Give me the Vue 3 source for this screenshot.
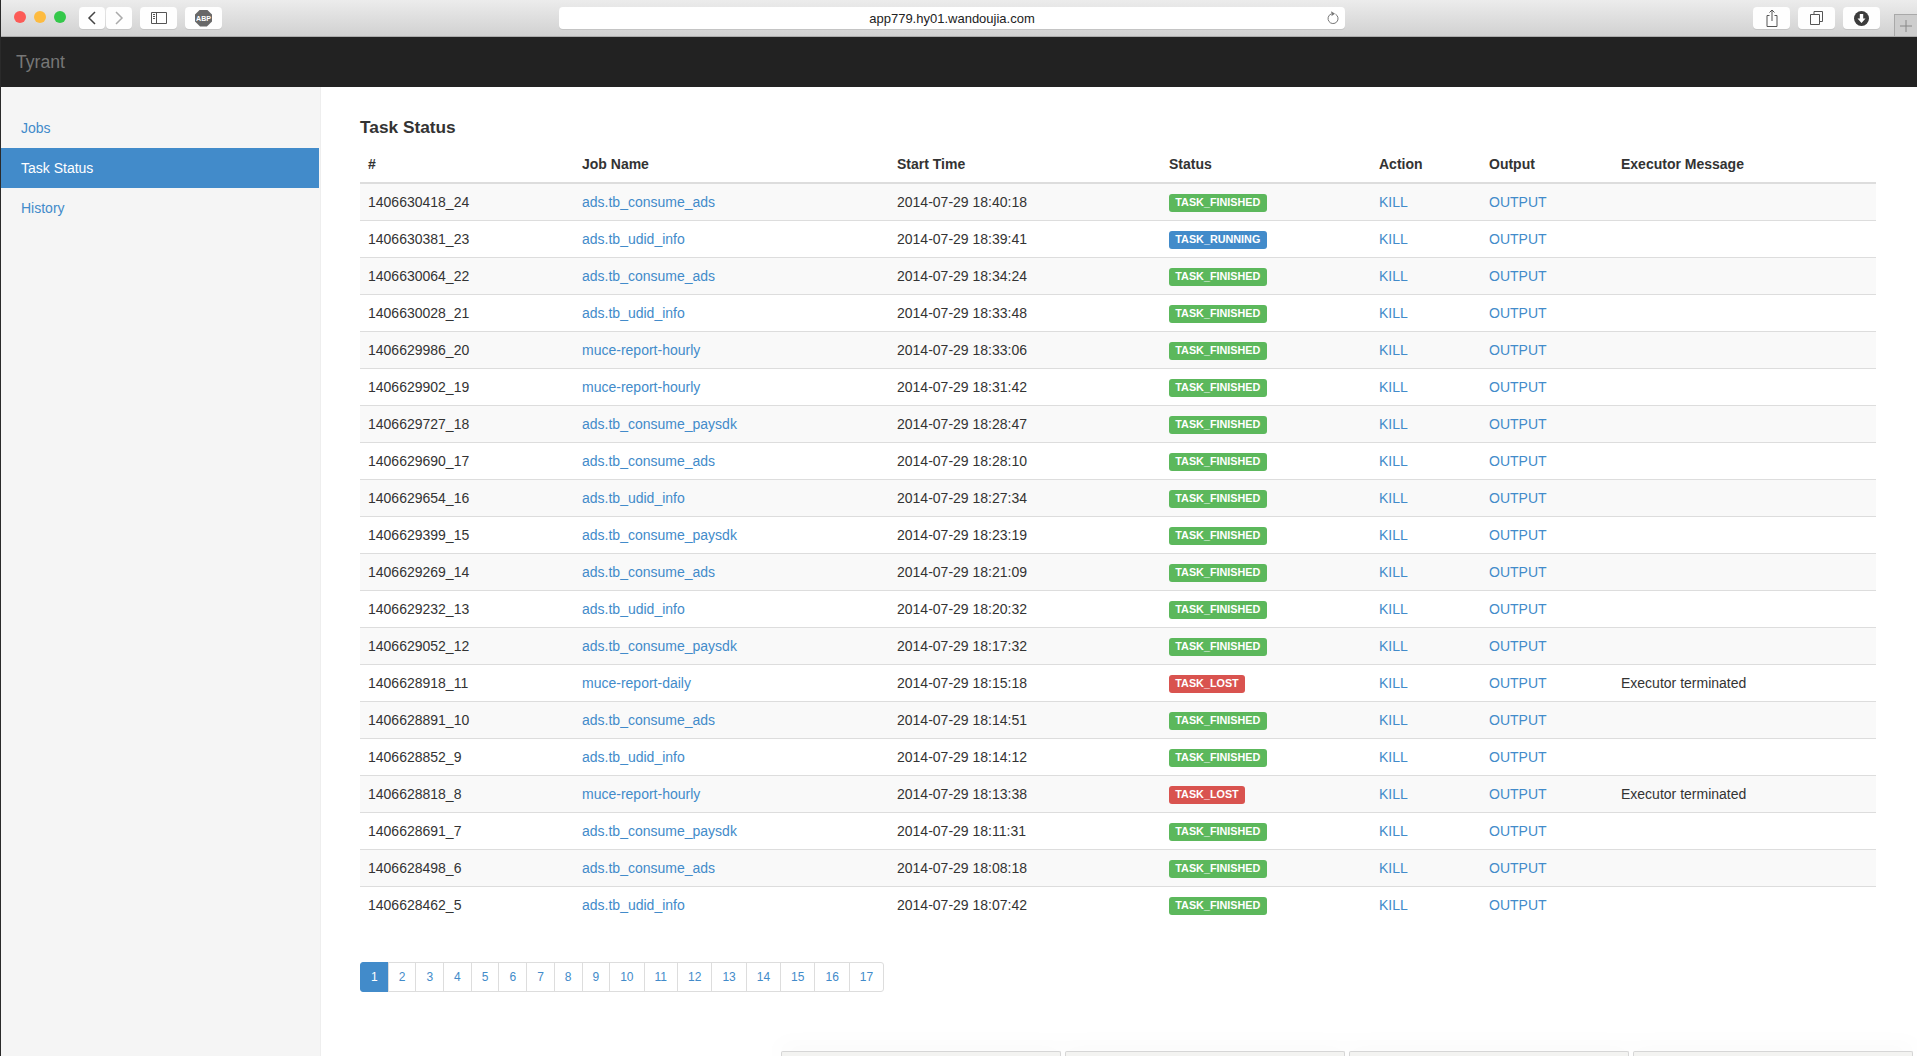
<script setup>
const rows = [
  ['1406630418_24', 'ads.tb_consume_ads', '2014-07-29 18:40:18', 'F', ''],
  ['1406630381_23', 'ads.tb_udid_info', '2014-07-29 18:39:41', 'R', ''],
  ['1406630064_22', 'ads.tb_consume_ads', '2014-07-29 18:34:24', 'F', ''],
  ['1406630028_21', 'ads.tb_udid_info', '2014-07-29 18:33:48', 'F', ''],
  ['1406629986_20', 'muce-report-hourly', '2014-07-29 18:33:06', 'F', ''],
  ['1406629902_19', 'muce-report-hourly', '2014-07-29 18:31:42', 'F', ''],
  ['1406629727_18', 'ads.tb_consume_paysdk', '2014-07-29 18:28:47', 'F', ''],
  ['1406629690_17', 'ads.tb_consume_ads', '2014-07-29 18:28:10', 'F', ''],
  ['1406629654_16', 'ads.tb_udid_info', '2014-07-29 18:27:34', 'F', ''],
  ['1406629399_15', 'ads.tb_consume_paysdk', '2014-07-29 18:23:19', 'F', ''],
  ['1406629269_14', 'ads.tb_consume_ads', '2014-07-29 18:21:09', 'F', ''],
  ['1406629232_13', 'ads.tb_udid_info', '2014-07-29 18:20:32', 'F', ''],
  ['1406629052_12', 'ads.tb_consume_paysdk', '2014-07-29 18:17:32', 'F', ''],
  ['1406628918_11', 'muce-report-daily', '2014-07-29 18:15:18', 'L', 'Executor terminated'],
  ['1406628891_10', 'ads.tb_consume_ads', '2014-07-29 18:14:51', 'F', ''],
  ['1406628852_9', 'ads.tb_udid_info', '2014-07-29 18:14:12', 'F', ''],
  ['1406628818_8', 'muce-report-hourly', '2014-07-29 18:13:38', 'L', 'Executor terminated'],
  ['1406628691_7', 'ads.tb_consume_paysdk', '2014-07-29 18:11:31', 'F', ''],
  ['1406628498_6', 'ads.tb_consume_ads', '2014-07-29 18:08:18', 'F', ''],
  ['1406628462_5', 'ads.tb_udid_info', '2014-07-29 18:07:42', 'F', '']
]
const labels = {
  F: { text: 'TASK_FINISHED', cls: 'green' },
  R: { text: 'TASK_RUNNING', cls: 'blue' },
  L: { text: 'TASK_LOST', cls: 'red' }
}
const pages = Array.from({ length: 17 }, (_, i) => i + 1)
</script>

<template>
  <div class="window">
    <header class="chrome">
      <div class="lights">
        <span class="light l-red"></span>
        <span class="light l-yellow"></span>
        <span class="light l-green"></span>
      </div>
      <div class="navpair">
        <button class="tbtn nav">
          <svg width="12" height="16" viewBox="0 0 12 16"><path d="M9 2 3 8l6 6" fill="none" stroke="#444" stroke-width="1.5" /></svg>
        </button>
        <button class="tbtn nav">
          <svg width="12" height="16" viewBox="0 0 12 16"><path d="m3 2 6 6-6 6" fill="none" stroke="#aaa" stroke-width="1.5" /></svg>
        </button>
      </div>
      <button class="tbtn wide side">
        <svg width="16" height="12" viewBox="0 0 16 12"><path d="M.5.5h15v11H.5zM5.5.5v11" fill="none" stroke="#555" /><path d="M2 2.5h2M2 4.5h2M2 6.5h2" stroke="#555" /></svg>
      </button>
      <button class="tbtn wide abp">
        <span class="stop">ABP</span>
      </button>
      <div class="url">
        <span class="url-text">app779.hy01.wandoujia.com</span>
        <svg class="reload" width="14" height="16" viewBox="0 0 14 16"><path d="M9.5 4.2A5 5 0 1 1 5 4" fill="none" stroke="#777" /><path d="M5.2 1.2 9 3.8 5.6 6z" fill="#777" /></svg>
      </div>
      <div class="right-btns">
        <button class="tbtn wide">
          <svg width="12" height="18" viewBox="0 0 12 18"><path d="M3.5 6.500H1v11h10v-11H8.500M6 12V1M3.500 3.500 6 1l2.500 2.500" fill="none" stroke="#555" /></svg>
        </button>
        <button class="tbtn wide">
          <svg width="13" height="14" viewBox="0 0 13 14"><path d="M.5 3.500h9v10h-9z" fill="none" stroke="#555" /><path d="M4 3V.500h8.500v10H10" fill="none" stroke="#555" /></svg>
        </button>
        <button class="tbtn wide">
          <svg width="15" height="15" viewBox="0 0 15 15"><circle cx="7.500" cy="7.500" r="7.500" fill="#3c3c3c" /><path d="M5.800 3h3.400v4.500h2.300l-4 4.500-4-4.500h2.300z" fill="#fff" /></svg>
        </button>
      </div>
      <div class="newtab">
        <svg width="12" height="12" viewBox="0 0 12 12"><path d="M6 0v12M0 6h12" stroke="#888" /></svg>
      </div>
    </header>

    <nav class="navbar"><span class="brand">Tyrant</span></nav>

    <div class="body">
      <aside class="sidebar">
        <a class="item">Jobs</a>
        <a class="item active">Task Status</a>
        <a class="item">History</a>
      </aside>
      <main class="main">
        <h1 class="title">Task Status</h1>
        <table class="table">
          <colgroup>
            <col class="c1" /><col class="c2" /><col class="c3" /><col class="c4" /><col class="c5" /><col class="c6" /><col class="c7" />
          </colgroup>
          <thead>
            <tr>
              <th>#</th><th>Job Name</th><th>Start Time</th><th>Status</th><th>Action</th><th>Output</th><th>Executor Message</th>
            </tr>
          </thead>
          <tbody>
            <tr v-for="r in rows" :key="r[0]">
              <td>{{ r[0] }}</td>
              <td><a>{{ r[1] }}</a></td>
              <td>{{ r[2] }}</td>
              <td><span class="label" :class="labels[r[3]].cls">{{ labels[r[3]].text }}</span></td>
              <td><a>KILL</a></td>
              <td><a>OUTPUT</a></td>
              <td>{{ r[4] }}</td>
            </tr>
          </tbody>
        </table>
        <ul class="pagination">
          <li v-for="p in pages" :key="p" :class="{ current: p === 1 }">{{ p }}</li>
        </ul>
      </main>
    </div>

    <div class="tabs-peek">
      <span class="peek"></span><span class="peek"></span><span class="peek"></span><span class="peek"></span>
    </div>
  </div>
</template>

<style>
html, body { margin: 0; background: #fff; overflow: hidden; }
</style>

<style scoped>
.window {
  position: relative;
  box-sizing: border-box;
  width: 1917px;
  height: 1056px;
  overflow: hidden;
  display: flex;
  flex-direction: column;
  border-left: 1px solid #2a2a2a;
  font-family: "Liberation Sans", Arial, sans-serif;
  font-size: 14px;
  line-height: 20px;
  color: #333;
  background: #fff;
}
.chrome {
  position: relative;
  flex: 0 0 37px;
  box-sizing: border-box;
  display: flex;
  align-items: flex-start;
  padding: 7px 0 0 13px;
  background: linear-gradient(#ececec, #d1d1d1);
  border-bottom: 1px solid #ababab;
}
.lights { display: flex; gap: 8px; margin-top: 4px; }
.light { width: 12px; height: 12px; border-radius: 50%; }
.l-red { background: #fc5b57; }
.l-yellow { background: #fdbb40; }
.l-green { background: #34c84a; }
.tbtn {
  display: flex;
  align-items: center;
  justify-content: center;
  height: 22px;
  padding: 0;
  border: 0;
  border-radius: 4px;
  background: #fefefe;
  box-shadow: 0 1px 0 #c4c4c4;
}
.navpair { display: flex; gap: 1px; margin-left: 13px; }
.nav { width: 26px; }
.wide { width: 37px; }
.side { margin-left: 8px; }
.abp { margin-left: 8px; }
.stop {
  display: flex;
  align-items: center;
  justify-content: center;
  width: 17px;
  height: 17px;
  background: #686868;
  clip-path: polygon(30% 0, 70% 0, 100% 30%, 100% 70%, 70% 100%, 30% 100%, 0 70%, 0 30%);
  color: #fff;
  font-size: 7px;
  font-weight: 700;
  line-height: 1;
}
.url {
  position: relative;
  box-sizing: border-box;
  width: 786px;
  height: 22px;
  margin-left: 337px;
  display: flex;
  align-items: center;
  justify-content: center;
  border-radius: 4px;
  background: #fff;
  box-shadow: 0 1px 0 #c4c4c4;
}
.url-text { font-size: 13px; color: #222; line-height: 1; }
.reload { position: absolute; right: 5px; top: 3px; }
.right-btns { display: flex; gap: 8px; margin-left: 408px; }
.newtab {
  position: absolute;
  right: 0;
  top: 14px;
  box-sizing: border-box;
  width: 23px;
  height: 22px;
  display: flex;
  align-items: center;
  justify-content: center;
  background: #cdcdcd;
  border: 1px solid #a9a9a9;
  border-width: 1px 0 0 1px;
}
.navbar {
  flex: 0 0 50px;
  display: flex;
  align-items: center;
  padding-left: 15px;
  background: #222;
}
.brand { color: #777; font-size: 17.600px; }
.body { flex: 1; display: flex; min-height: 0; }
.sidebar {
  box-sizing: border-box;
  flex: 0 0 320px;
  padding: 21px 1px 0 0;
  background: #f5f5f5;
  border-right: 1px solid #eee;
}
.item {
  display: block;
  height: 40px;
  padding: 10px 20px;
  box-sizing: border-box;
  color: #428bca;
}
.item.active { background: #428bca; color: #fff; }
.main { flex: 1; padding: 30px 41px 0 39px; min-width: 0; }
.title {
  margin: 0 0 9px;
  font-size: 17.300px;
  font-weight: 700;
  line-height: 20px;
}
.table {
  width: 1516px;
  table-layout: fixed;
  border-collapse: collapse;
  border-spacing: 0;
}
.c1 { width: 214px; }
.c2 { width: 315px; }
.c3 { width: 272px; }
.c4 { width: 210px; }
.c5 { width: 110px; }
.c6 { width: 132px; }
.c7 { width: 263px; }
th, td { padding: 8px; text-align: left; vertical-align: top; }
th { font-weight: 700; border-bottom: 2px solid #ddd; }
td { border-top: 1px solid #ddd; }
tbody tr:first-child td { border-top: 0; }
tbody tr:nth-child(odd) { background: #f9f9f9; }
a { color: #428bca; }
.label {
  display: inline-block;
  padding: 3px 6.300px 4px;
  margin-top: 2px;
  vertical-align: top;
  border-radius: 3px;
  color: #fff;
  font-size: 10.800px;
  font-weight: 700;
  line-height: 11px;
}
.green { background: #5cb85c; }
.blue { background: #428bca; }
.red { background: #d9534f; }
.pagination {
  display: flex;
  margin: 39px 0 0;
  padding: 0;
  list-style: none;
  font-size: 12px;
  line-height: 18px;
}
.pagination li {
  padding: 5px 10px;
  margin-left: -1px;
  background: #fff;
  border: 1px solid #ddd;
  color: #428bca;
}
.pagination li:first-child { margin-left: 0; border-radius: 3px 0 0 3px; }
.pagination li:last-child { border-radius: 0 3px 3px 0; }
.pagination li.current { background: #428bca; border-color: #428bca; color: #fff; }
.tabs-peek {
  position: absolute;
  left: 780px;
  bottom: 0;
  display: flex;
  gap: 4px;
  filter: drop-shadow(0 -2px 10px rgba(0, 0, 0, .06));
}
.peek {
  width: 280px;
  height: 5px;
  box-sizing: border-box;
  background: #f3f3f1;
  border: 1px solid #d6d6d6;
  border-bottom: 0;
  border-radius: 2px 2px 0 0;
}
</style>
